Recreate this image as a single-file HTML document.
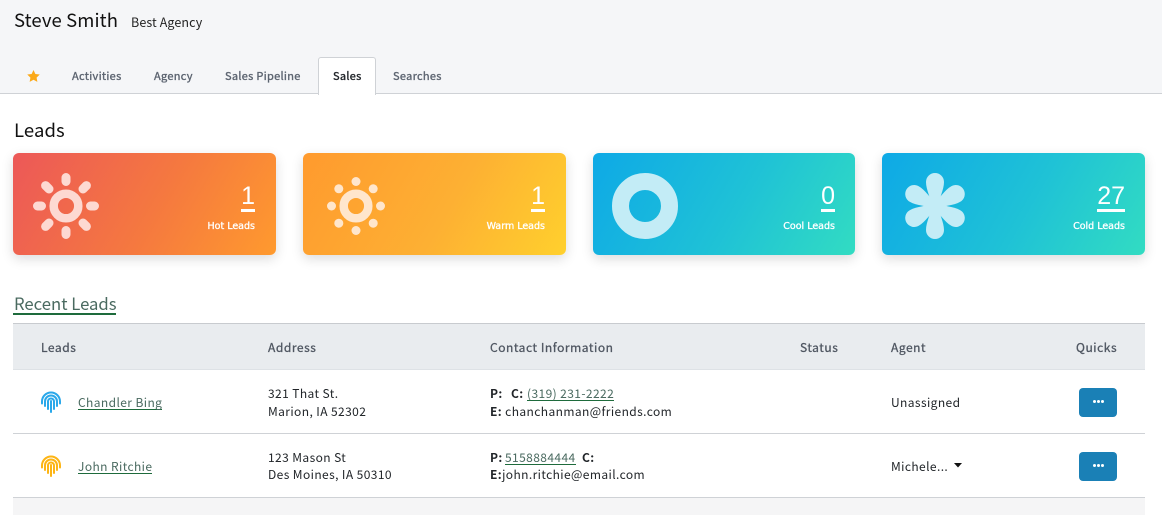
<!DOCTYPE html>
<html><head><meta charset="utf-8"><style>
html,body{margin:0;padding:0;background:#fff}
#p{position:relative;width:1162px;height:515px;overflow:hidden;background:#fff;font-family:"Noto Sans CJK JP","Liberation Sans",sans-serif;color:#212529;font-size:12px;letter-spacing:.4px}
#p div,#p a,#p svg{position:absolute;white-space:nowrap}
.t{line-height:18px}
a{color:#4a6a60;text-decoration:none;border-bottom:1px solid #1e6b3c;line-height:17px;height:15px}
.tab{top:67px;font-size:11px;color:#5c6470;line-height:18px;letter-spacing:.3px;-webkit-text-stroke:.35px currentColor}
.card{top:153px;height:102px;border-radius:6px;box-shadow:0 4px 12px rgba(0,0,0,.14)}
.n{right:20px;top:27px;font-family:"Liberation Sans",sans-serif;font-size:25px;line-height:32px;color:#fff;letter-spacing:0;border-bottom:3px solid #fff;height:29px;font-weight:400}
.l{right:20px;top:66px;color:#fff;font-family:"DejaVu Sans",sans-serif;font-size:9.5px;line-height:16px;letter-spacing:0;-webkit-text-stroke:.3px #fff}
.h{top:339px;font-size:12px;color:#4f5661;line-height:18px;letter-spacing:.55px;-webkit-text-stroke:.3px currentColor}
.b{font-weight:700}
.btn{left:1079px;width:38px;height:29px;background:#1a80b6;border-radius:4px}
.btn i{position:absolute;top:12px;width:3px;height:3px;background:#fff;border-radius:50%}
</style></head><body><div id="p">
<div style="left:0;top:0;width:1162px;height:93px;background:#f5f6f8"></div>
<div style="left:0;top:93px;width:1162px;height:1px;background:#cfd2d6"></div>
<div class="t" style="left:14px;top:7px;font-size:18.5px;line-height:26px;letter-spacing:.1px;color:#111">Steve Smith</div>
<div class="t" style="left:131px;top:13px;font-size:12.5px;letter-spacing:.1px;color:#222">Best Agency</div>
<svg style="left:27px;top:70px" width="13" height="12" viewBox="0 0 24 23"><path fill="#fba919" d="M12 0l3.6 7.6 8.4 1.1-6.1 5.8 1.5 8.3L12 18.800l-7.400 4 1.500-8.300L0 8.700l8.400-1.100z"/></svg>
<div class="tab" style="left:72px">Activities</div>
<div class="tab" style="left:154px">Agency</div>
<div class="tab" style="left:225px">Sales Pipeline</div>
<div style="left:318px;top:57px;width:56px;height:37px;background:#fff;border:1px solid #cfd2d6;border-bottom:0;border-radius:3px 3px 0 0"></div>
<div class="tab" style="left:333px;color:#1d2126">Sales</div>
<div class="tab" style="left:393px">Searches</div>
<div class="t" style="left:14px;top:117px;font-size:18.5px;line-height:26px;letter-spacing:.1px;color:#111">Leads</div>

<div class="card" style="left:13px;width:263px;background:linear-gradient(120deg,#ec5858,#f5793f 55%,#ff9a2e)"><div class="n" style="right:21px">1</div><div class="l" style="right:21px">Hot Leads</div></div>
<svg style="left:30px;top:170px" width="72" height="72" viewBox="-36 -36 72 72"><g fill="none" stroke="#fdd9d2"><circle r="12.300" stroke-width="8.500"/><g stroke-width="9" stroke-linecap="round"><path d="M0-28.500V-24.500M0 28.500V24.500M-28.500 0H-24.500M28.500 0H24.500M-20.400-20.400L-17-17M20.400 20.400L17 17M20.400-20.400L17-17M-20.400 20.400L-17 17"/></g></g></svg>

<div class="card" style="left:303px;width:263px;background:linear-gradient(120deg,#ff9a2e,#fdb033 55%,#ffd02d)"><div class="n" style="right:21px">1</div><div class="l" style="right:21px">Warm Leads</div></div>
<svg style="left:320px;top:170px" width="72" height="72" viewBox="-36 -36 72 72"><g fill="#ffe6cc"><circle r="12.300" fill="none" stroke="#ffe6cc" stroke-width="8.500"/><circle cy="-24.500" r="4.500"/><circle cy="24.500" r="4.500"/><circle cx="-24.500" r="4.500"/><circle cx="24.500" r="4.500"/><circle cx="-17.200" cy="-17.200" r="4.500"/><circle cx="17.200" cy="-17.200" r="4.500"/><circle cx="-17.200" cy="17.200" r="4.500"/><circle cx="17.200" cy="17.200" r="4.500"/></g></svg>

<div class="card" style="left:593px;width:262px;background:linear-gradient(120deg,#0ea9e6,#1fc2d6 55%,#32dcc2)"><div class="n">0</div><div class="l">Cool Leads</div></div>
<svg style="left:610px;top:171px" width="70" height="70" viewBox="-35 -35 70 70"><circle r="24.500" fill="none" stroke="#c3ecf6" stroke-width="17"/></svg>

<div class="card" style="left:882px;width:263px;background:linear-gradient(120deg,#0ea9e6,#1fc2d6 55%,#32dcc2)"><div class="n">27</div><div class="l">Cold Leads</div></div>
<svg style="left:900px;top:171px" width="70" height="70" viewBox="-35 -35 70 70"><g fill="#c3ecf6"><path d="M-3.500 0C-4-8-9-16-9-24A9 9 0 0 1 9-24C9-16 4-8 3.500 0Z"/><path transform="rotate(60)" d="M-3.500 0C-4-8-9-16-9-24A9 9 0 0 1 9-24C9-16 4-8 3.500 0Z"/><path transform="rotate(120)" d="M-3.500 0C-4-8-9-16-9-24A9 9 0 0 1 9-24C9-16 4-8 3.500 0Z"/><path transform="rotate(180)" d="M-3.500 0C-4-8-9-16-9-24A9 9 0 0 1 9-24C9-16 4-8 3.500 0Z"/><path transform="rotate(240)" d="M-3.500 0C-4-8-9-16-9-24A9 9 0 0 1 9-24C9-16 4-8 3.500 0Z"/><path transform="rotate(300)" d="M-3.500 0C-4-8-9-16-9-24A9 9 0 0 1 9-24C9-16 4-8 3.500 0Z"/></g></svg>

<div class="t" style="left:14px;top:291px;font-size:16.7px;line-height:25px;letter-spacing:0;color:#4a6a60">Recent Leads</div>
<div style="left:13px;top:313px;width:103px;height:2px;background:#1e6b3c"></div>

<div style="left:13px;top:323px;width:1132px;height:47px;background:#e9ecef;border-top:1px solid #c8cbcf;box-sizing:border-box;border-bottom:1px solid #dee2e6"></div>
<div class="h" style="left:41px">Leads</div>
<div class="h" style="left:268px">Address</div>
<div class="h" style="left:490px">Contact Information</div>
<div class="h" style="left:800px">Status</div>
<div class="h" style="left:891px">Agent</div>
<div class="h" style="left:1076px">Quicks</div>

<svg style="left:40px;top:391px" width="22" height="22" viewBox="0 0 22 22"><g fill="none" stroke="#2aa8ea" stroke-width="2" stroke-linecap="round"><path d="M2 12.500V10.500A9 9 0 0 1 20 10.500V12.500"/><path d="M5 15V10.500A6 6 0 0 1 17 10.500V15"/><path d="M8 18V10.500A3 3 0 0 1 14 10.500V18"/><path d="M11 21V10"/></g></svg>
<a style="left:78px;top:394px">Chandler Bing</a>
<div class="t" style="left:268px;top:385px">321 That St.</div>
<div class="t" style="left:268px;top:403px">Marion, IA 52302</div>
<div class="t b" style="left:490px;top:385px">P:</div>
<div class="t b" style="left:511px;top:385px">C:</div>
<a style="left:527px;top:385px">(319) 231-2222</a>
<div class="t" style="left:490px;top:403px"><span class="b">E:</span> chanchanman@friends.com</div>
<div class="t" style="left:891px;top:394px">Unassigned</div>
<div class="btn" style="top:388px"><i style="left:14px"></i><i style="left:18px"></i><i style="left:22px"></i></div>

<div style="left:13px;top:433px;width:1132px;height:1px;background:#cfd2d6"></div>

<svg style="left:40px;top:455px" width="22" height="22" viewBox="0 0 22 22"><g fill="none" stroke="#fdb515" stroke-width="2" stroke-linecap="round"><path d="M2 12.500V10.500A9 9 0 0 1 20 10.500V12.500"/><path d="M5 15V10.500A6 6 0 0 1 17 10.500V15"/><path d="M8 18V10.500A3 3 0 0 1 14 10.500V18"/><path d="M11 21V10"/></g></svg>
<a style="left:78px;top:458px">John Ritchie</a>
<div class="t" style="left:268px;top:449px">123 Mason St</div>
<div class="t" style="left:268px;top:466px">Des Moines, IA 50310</div>
<div class="t b" style="left:490px;top:449px">P:</div>
<a style="left:505px;top:449px">5158884444</a>
<div class="t b" style="left:582px;top:449px">C:</div>
<div class="t" style="left:490px;top:466px"><span class="b">E:</span>john.ritchie@email.com</div>
<div class="t" style="left:891px;top:458px">Michele...</div>
<svg style="left:954px;top:463px" width="8" height="5"><path d="M0 0H8L4 4.500Z" fill="#111"/></svg>
<div class="btn" style="top:452px"><i style="left:14px"></i><i style="left:18px"></i><i style="left:22px"></i></div>

<div style="left:13px;top:497px;width:1132px;height:1px;background:#cfd2d6"></div>
<div style="left:13px;top:498px;width:1132px;height:17px;background:#f5f5f6"></div>
</div></body></html>
